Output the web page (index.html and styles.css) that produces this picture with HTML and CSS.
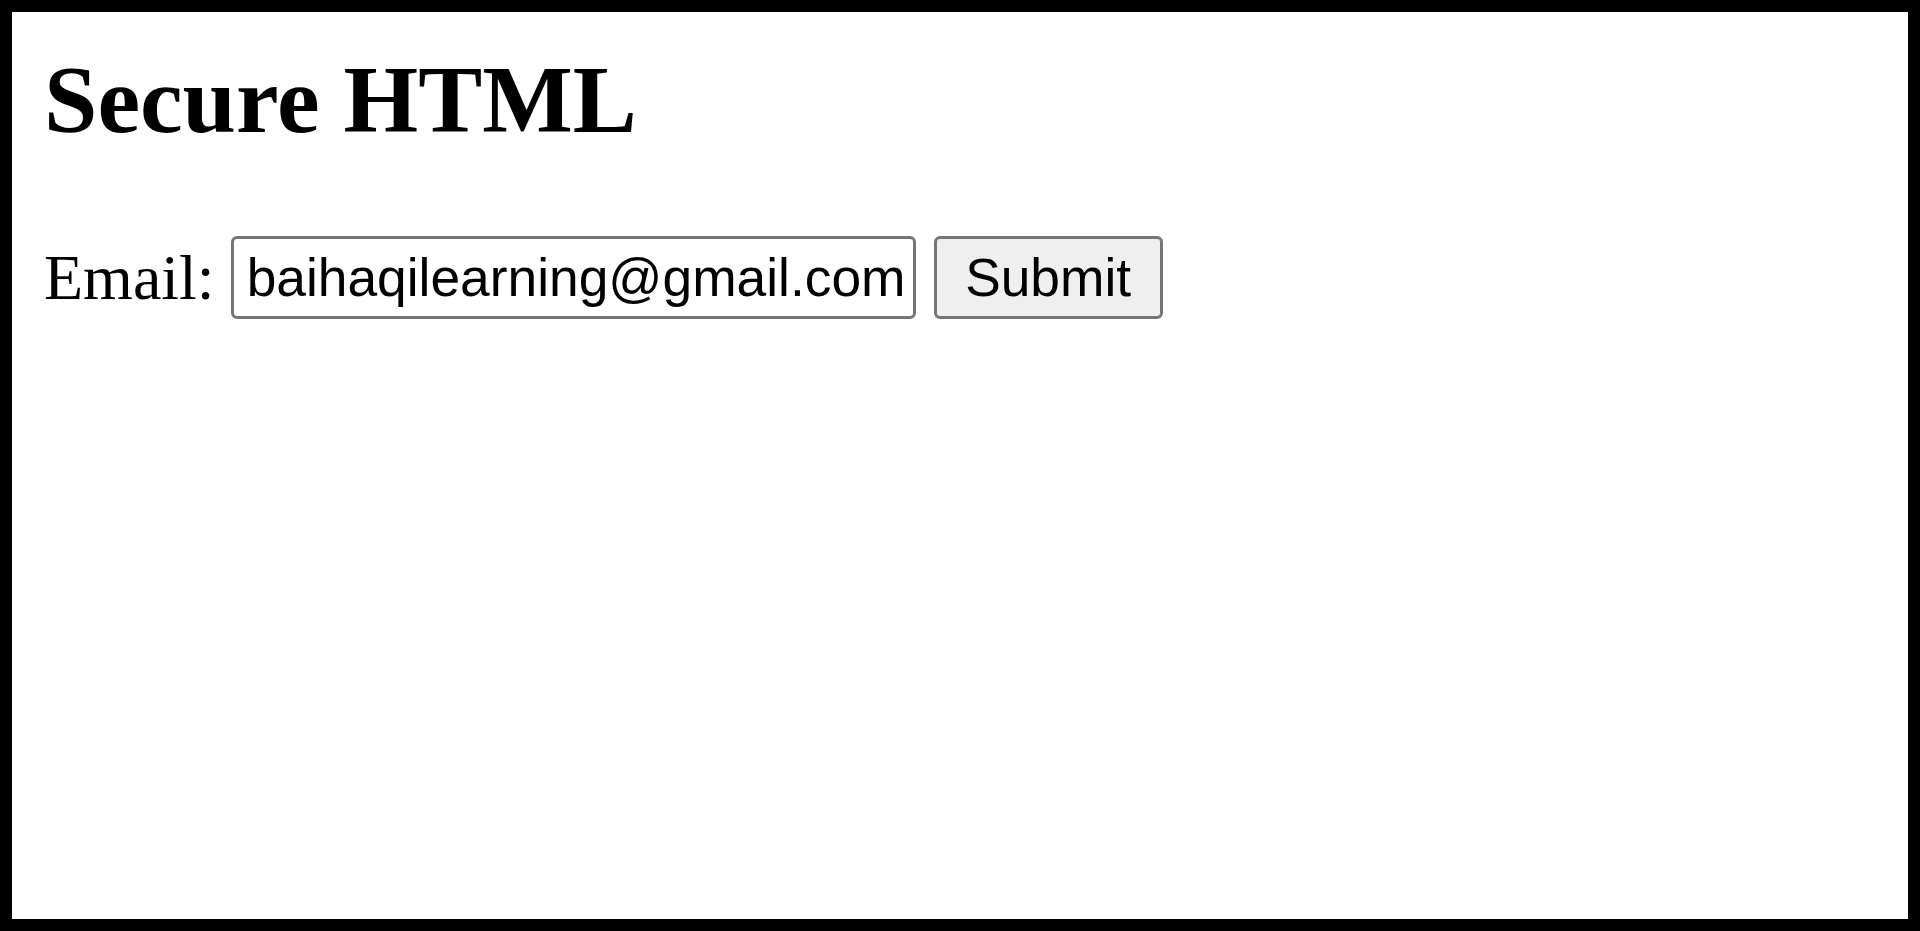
FILE: index.html
```html
<!DOCTYPE html>
<html>
<head>
<meta charset="utf-8">
<title>Secure HTML</title>
<link rel="stylesheet" href="styles.css">
</head>
<body>
<div class="frame">
  <h1 class="title">Secure HTML</h1>
  <form class="row">
    <label class="label" for="email">Email:</label>
    <input class="field" id="email" type="text" value="baihaqilearning@gmail.com">
    <button class="btn" type="button">Submit</button>
  </form>
</div>
</body>
</html>
```

FILE: styles.css
```css
html, body {
  margin: 0;
  padding: 0;
  background: #fff;
}
.frame {
  box-sizing: border-box;
  width: 1920px;
  height: 931px;
  border: 12px solid #000;
  padding: 32px 32px;
  font-family: "Liberation Serif", "Times New Roman", serif;
  color: #000;
}
.title {
  margin: 0 0 81px 0;
  font-size: 96px;
  font-weight: bold;
  line-height: normal;
}
.row {
  display: flex;
  align-items: center;
  margin: 0;
}
.label {
  font-size: 64px;
  line-height: normal;
  margin-right: 16px;
}
.field {
  box-sizing: border-box;
  width: 685px;
  height: 83px;
  margin: 0;
  padding: 0 0 0 13px;
  border: 3px solid #767676;
  border-radius: 6px;
  background: #fff;
  font-family: "Liberation Sans", Arial, sans-serif;
  font-size: 53.33px;
  color: #000;
  outline: none;
}
.btn {
  box-sizing: border-box;
  width: 229px;
  height: 83px;
  margin: 0 0 0 18px;
  padding: 0;
  border: 3px solid #767676;
  border-radius: 6px;
  background: #efefef;
  font-family: "Liberation Sans", Arial, sans-serif;
  font-size: 53.33px;
  color: #000;
}
```
